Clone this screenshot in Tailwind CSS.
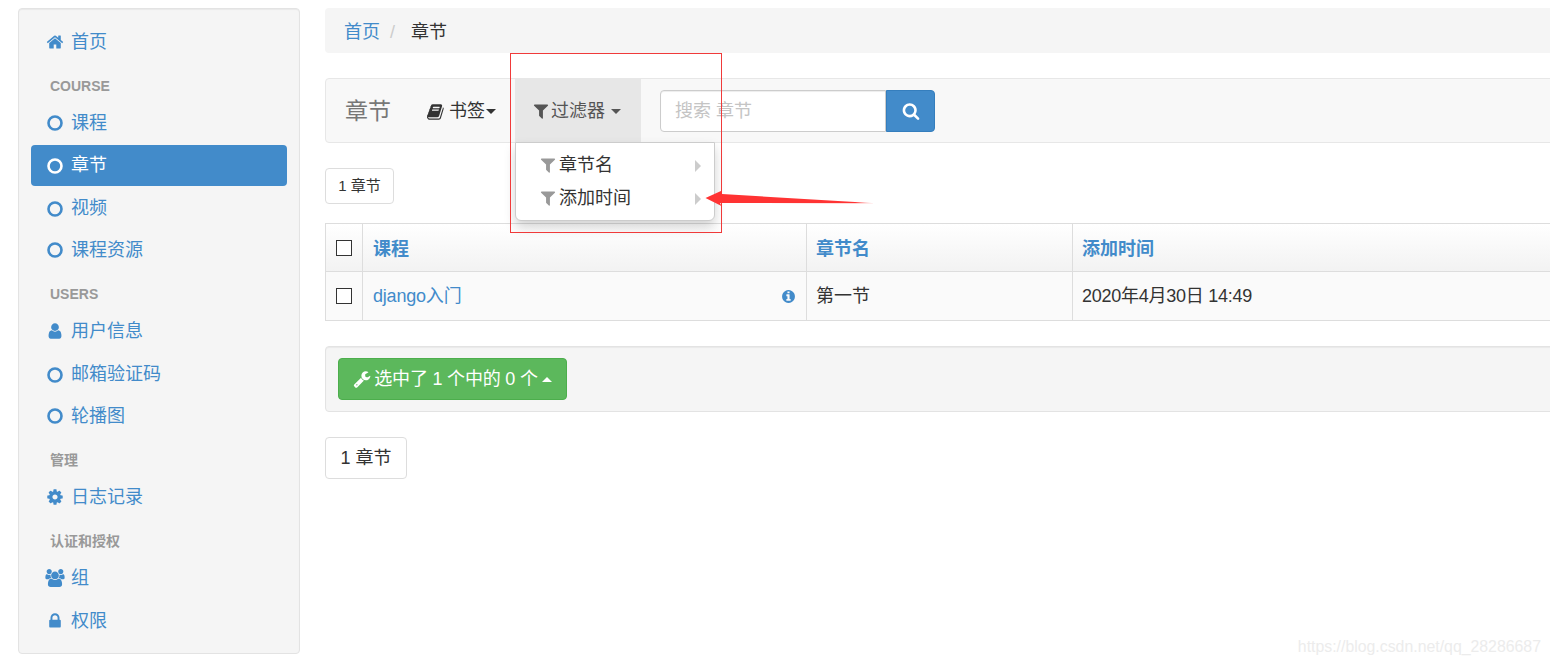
<!DOCTYPE html>
<html lang="zh-CN">
<head>
    <meta charset="UTF-8">
    <title>章节</title>
    <script src="https://cdn.jsdelivr.net/npm/@tailwindcss/browser@4"></script>
</head>
<body class="relative w-[1550px] h-[665px] overflow-hidden bg-white text-[#333] text-[18px] font-['Liberation_Sans','Noto_Sans_CJK_SC',sans-serif]">
    <!-- 共用圖示 -->
    <svg class="hidden">
        <symbol id="i-home" viewBox="0 0 1792 1792"><path d="M1472 992v480q0 26-19 45t-45 19h-384v-384h-256v384h-384q-26 0-45-19t-19-45v-480q0-1 .5-3t.5-3l575-474 575 474q1 2 1 6zm223-69l-62 74q-8 9-21 11h-3q-13 0-21-7l-692-577-692 577q-12 8-24 7-13-2-21-11l-62-74q-8-10-7-23.500t11-21.500l719-599q32-26 76-26t76 26l244 204v-195q0-14 9-23t23-9h192q14 0 23 9t9 23v408l219 182q10 8 11 21.500t-7 23.500z" fill="currentColor"/></symbol>
        <symbol id="i-circle" viewBox="0 0 16 16"><circle cx="8" cy="8" r="6.5" fill="none" stroke="currentColor" stroke-width="2.6"/></symbol>
        <symbol id="i-user" viewBox="0 0 1792 1792"><path d="M1536 1399q0 109-62.500 187t-150.500 78h-854q-88 0-150.500-78t-62.500-187q0-85 8.500-160.500t31.500-152 58.500-131 94-89 134.500-34.500q131 128 313 128t313-128q76 0 134.500 34.500t94 89 58.500 131 31.500 152 8.500 160.500zm-256-887q0 159-112.500 271.500t-271.500 112.500-271.500-112.500-112.500-271.500 112.500-271.500 271.500-112.500 271.500 112.500 112.500 271.500z" fill="currentColor"/></symbol>
        <symbol id="i-cog" viewBox="0 0 1792 1792"><path d="M1152 896q0-106-75-181t-181-75-181 75-75 181 75 181 181 75 181-75 75-181zm512-109v222q0 12-8 23t-20 13l-185 28q-19 54-39 91 35 50 107 138 10 12 10 25t-9 23q-27 37-99 108t-94 71q-12 0-26-9l-138-108q-44 23-91 38-16 136-29 186-7 28-36 28h-222q-14 0-24.500-8.500t-11.500-21.500l-28-184q-49-16-90-37l-141 107q-10 9-25 9-14 0-25-11-126-114-165-168-7-10-7-23 0-12 8-23 15-21 51-66.500t54-70.500q-27-50-41-99l-183-27q-13-2-21-12.500t-8-23.500v-222q0-12 8-23t19-13l186-28q14-46 39-92-40-57-107-138-10-12-10-24 0-10 9-23 26-36 98.500-107.500t94.500-71.500q13 0 26 10l138 107q44-23 91-38 16-136 29-186 7-28 36-28h222q14 0 24.500 8.500t11.500 21.500l28 184q49 16 90 37l142-107q9-9 24-9 13 0 25 10 129 119 165 170 7 8 7 22 0 12-8 23-15 21-51 66.500t-54 70.500q26 50 41 98l183 28q13 2 21 12.500t8 23.500z" fill="currentColor"/></symbol>
        <symbol id="i-group" viewBox="0 0 1920 1792"><path d="M593 896q-162 5-265 128h-134q-82 0-138-40.500t-56-118.500q0-353 124-353 6 0 43.500 21t97.500 42.500 119 21.500q67 0 133-23-5 37-5 66 0 139 81 256zm1071 637q0 120-73 189.500t-194 69.500h-874q-121 0-194-69.500t-73-189.500q0-53 3.500-103.500t14-109 26.500-108.500 43-97.500 62-81 85.500-53.500 111.500-20q10 0 43 21.500t73 48 107 48 135 21.500 135-21.500 107-48 73-48 43-21.500q61 0 111.500 20t85.500 53.500 62 81 43 97.500 26.500 108.500 14 109 3.500 103.500zm-1024-1277q0 106-75 181t-181 75-181-75-75-181 75-181 181-75 181 75 75 181zm704 384q0 159-112.500 271.500t-271.500 112.500-271.500-112.500-112.500-271.500 112.500-271.500 271.500-112.500 271.500 112.500 112.500 271.500zm576 225q0 78-56 118.500t-138 40.500h-134q-103-123-265-128 81-117 81-256 0-29-5-66 66 23 133 23 59 0 119-21.500t97.500-42.500 43.500-21q124 0 124 353zm-128-609q0 106-75 181t-181 75-181-75-75-181 75-181 181-75 181 75 75 181z" fill="currentColor"/></symbol>
        <symbol id="i-lock" viewBox="0 0 1792 1792"><path d="M640 768h512v-192q0-106-75-181t-181-75-181 75-75 181v192zm832 96v576q0 40-28 68t-68 28h-960q-40 0-68-28t-28-68v-576q0-40 28-68t68-28h32v-192q0-184 132-316t316-132 316 132 132 316v192h32q40 0 68 28t28 68z" fill="currentColor"/></symbol>
        <symbol id="i-filter" viewBox="0 0 1792 1792"><path d="M1595 295q17 41-14 70l-493 493v742q0 42-39 59-13 5-25 5-27 0-45-19l-256-256q-19-19-19-45v-486l-493-493q-31-29-14-70 17-39 59-39h1280q42 0 59 39z" fill="currentColor"/></symbol>
        <symbol id="i-book" viewBox="0 0 1792 1792"><path d="M1639 478q40 57 18 129l-275 906q-19 64-76.500 107.500t-122.500 43.500h-923q-77 0-148.500-53.500t-99.500-131.500q-24-67-2-127 0-4 3-27t4-37q1-8-3-21.500t-3-19.500q2-11 8-21t16.500-23.500 16.500-23.500q23-38 45-91.500t30-91.500q3-10 .5-30t-.5-28q3-11 17-28t17-23q21-36 42-92t25-90q1-9-2.500-32t.5-28q4-13 22-30.500t22-22.500q19-26 42.500-84.500t27.500-96.500q1-8-3-25.500t-2-26.500q2-8 9-18t18-23 17-21q8-12 16.500-30.500t15-35 16-36 19.500-32 26.500-23.500 36-11.500 47.500 5.500l-1 3q38-9 51-9h761q74 0 114 56t18 130l-274 906q-36 119-71.500 153.500t-128.500 34.500h-869q-27 0-38 15-11 16-1 43 24 70 144 70h923q29 0 56-15.500t35-41.500l300-987q7-22 5-57 38 15 59 43zm-1064 2q-4 13 2 22.500t20 9.500h608q13 0 25.500-9.500t16.500-22.500l21-64q4-13-2-22.500t-20-9.500h-608q-13 0-25.500 9.500t-16.500 22.500zm-83 256q-4 13 2 22.500t20 9.500h608q13 0 25.500-9.500t16.500-22.500l21-64q4-13-2-22.500t-20-9.500h-608q-13 0-25.500 9.500t-16.500 22.500z" fill="currentColor"/></symbol>
    </svg>

    <div class="flex items-start pl-[18px] pt-[8px] gap-[25px]">
        <!-- 側邊欄 -->
        <aside class="w-[282px] h-[646px] shrink-0 bg-[#f5f5f5] border border-[#e3e3e3] rounded-[4px] shadow-[inset_0_1px_1px_rgba(0,0,0,0.05)] pl-[12px] pr-[12px] pt-[13px] text-[#428bca]">
            <a class="flex items-center gap-[7px] h-[40.4px] pl-[15px] rounded-[4px]"><svg class="w-[18px] h-[18px] shrink-0"><use href="#i-home"/></svg>首页</a>
            <div class="h-[40.6px] pt-[14px] pl-[19px] text-[14px] leading-[20px] font-bold text-[#999]">COURSE</div>
            <a class="flex items-center gap-[8px] h-[40.4px] pl-[16px] rounded-[4px]"><svg class="w-[16px] h-[16px] shrink-0"><use href="#i-circle"/></svg>课程</a>
            <a class="flex items-center gap-[8px] h-[40.4px] mt-[2px] pl-[16px] rounded-[4px] bg-[#428bca] text-white"><svg class="w-[16px] h-[16px] shrink-0"><use href="#i-circle"/></svg>章节</a>
            <a class="flex items-center gap-[8px] h-[40.4px] mt-[2px] pl-[16px] pt-[2px] rounded-[4px]"><svg class="w-[16px] h-[16px] shrink-0"><use href="#i-circle"/></svg>视频</a>
            <a class="flex items-center gap-[8px] h-[40.4px] mt-[2px] pl-[16px] rounded-[4px]"><svg class="w-[16px] h-[16px] shrink-0"><use href="#i-circle"/></svg>课程资源</a>
            <div class="h-[40.6px] pt-[13px] pl-[19px] text-[14px] leading-[20px] font-bold text-[#999]">USERS</div>
            <a class="flex items-center gap-[7px] h-[40.4px] pl-[15px] rounded-[4px]"><svg class="w-[18px] h-[18px] shrink-0"><use href="#i-user"/></svg>用户信息</a>
            <a class="flex items-center gap-[8px] h-[40.4px] mt-[2px] pl-[16px] pt-[2px] rounded-[4px]"><svg class="w-[16px] h-[16px] shrink-0"><use href="#i-circle"/></svg>邮箱验证码</a>
            <a class="flex items-center gap-[8px] h-[40.4px] mt-[2px] pl-[16px] rounded-[4px]"><svg class="w-[16px] h-[16px] shrink-0"><use href="#i-circle"/></svg>轮播图</a>
            <div class="h-[40.6px] pt-[14px] pl-[19px] text-[14px] leading-[20px] font-bold text-[#999]">管理</div>
            <a class="flex items-center gap-[7px] h-[40.4px] pl-[15px] rounded-[4px]"><svg class="w-[18px] h-[18px] shrink-0"><use href="#i-cog"/></svg>日志记录</a>
            <div class="h-[40.6px] pt-[14px] pl-[19px] text-[14px] leading-[20px] font-bold text-[#999]">认证和授权</div>
            <a class="flex items-center gap-[6px] h-[40.4px] pl-[14px] rounded-[4px]"><svg class="w-[20px] h-[18px] shrink-0"><use href="#i-group"/></svg>组</a>
            <a class="flex items-center gap-[7px] h-[40.4px] mt-[2px] pl-[15px] pt-[2px] rounded-[4px]"><svg class="w-[18px] h-[18px] shrink-0"><use href="#i-lock"/></svg>权限</a>
        </aside>

        <!-- 主內容 -->
        <main class="w-[1260px] shrink-0">
            <div class="flex items-center h-[45px] pl-[19px] pt-[3px] bg-[#f5f5f5] rounded-[4px]">
                <a class="text-[#428bca]">首页</a>
                <span class="text-[#ccc] ml-[10px] mr-[16px]">/</span>
                <span>章节</span>
            </div>

            <!-- 工具列 -->
            <div class="relative flex items-center h-[65px] mt-[25px] bg-[#f8f8f8] border border-[#e7e7e7] rounded-[4px]">
                <span class="ml-[19px] w-[82px] pt-[1px] text-[23px] text-[#777]">章节</span>
                <span class="flex items-center pt-[2px] text-[#333]">
                    <svg class="w-[18px] h-[18px] mr-[4px]"><use href="#i-book"/></svg>书签<span class="ml-[1px] border-x-[5px] border-x-transparent border-t-[5px] border-t-[#333]"></span>
                </span>
                <span class="flex items-center self-stretch ml-[19px] w-[126px] pl-[17px] pt-[2px] bg-[#e7e7e7] text-[#555]">
                    <svg class="w-[18px] h-[18px] -mt-[2px] mr-[1px]"><use href="#i-filter"/></svg>过滤器<span class="ml-[6px] border-x-[5px] border-x-transparent border-t-[5px] border-t-[#555]"></span>
                </span>
                <div class="flex ml-[19px]">
                    <div class="flex items-center w-[226px] h-[42px] pl-[14px] pt-[2px] bg-white border border-[#ccc] rounded-l-[4px] shadow-[inset_0_1px_1px_rgba(0,0,0,0.075)] text-[#c4c4c4]">搜索 章节</div>
                    <button class="flex items-center justify-center w-[49px] h-[42px] bg-[#428bca] border border-[#357ebd] rounded-r-[4px] text-white">
                        <svg class="w-[18px] h-[18px]" viewBox="0 0 1792 1792"><path d="M1216 832q0-185-131.500-316.500t-316.500-131.500-316.500 131.500-131.500 316.500 131.500 316.500 316.500 131.500 316.500-131.500 131.500-316.500zm512 832q0 52-38 90t-90 38q-54 0-90-38l-343-342q-179 124-399 124-143 0-273.500-55.500t-225-150-150-225-55.500-273.500 55.500-273.500 150-225 225-150 273.500-55.500 273.500 55.500 225 150 150 225 55.500 273.500q0 220-124 399l343 343q37 37 37 90z" fill="currentColor"/></svg>
                    </button>
                </div>

                <!-- 過濾器選單 -->
                <div class="absolute z-10 left-[189px] top-[63px] w-[200px] h-[79px] pt-[6px] bg-white border border-[#ccc] rounded-b-[6px] shadow-[0_6px_12px_rgba(0,0,0,0.175)]">
                    <div class="flex items-center h-[33px] pl-[23px] pr-[13px]">
                        <svg class="w-[18px] h-[18px] -mt-[2px] mr-[2px] text-[#999]"><use href="#i-filter"/></svg>章节名
                        <span class="ml-auto border-y-[6px] border-y-transparent border-l-[6px] border-l-[#ccc]"></span>
                    </div>
                    <div class="flex items-center h-[33px] pl-[23px] pr-[13px]">
                        <svg class="w-[18px] h-[18px] -mt-[2px] mr-[2px] text-[#999]"><use href="#i-filter"/></svg>添加时间
                        <span class="ml-auto border-y-[6px] border-y-transparent border-l-[6px] border-l-[#ccc]"></span>
                    </div>
                </div>
            </div>

            <div class="flex items-center justify-center w-[69px] h-[36px] mt-[25px] border border-[#ddd] rounded-[4px] text-[15px]">1 章节</div>

            <!-- 資料表 -->
            <table class="w-full mt-[19px] table-fixed border-collapse">
                <colgroup>
                    <col class="w-[37px]"><col class="w-[444px]"><col class="w-[266px]"><col>
                </colgroup>
                <thead>
                    <tr class="h-[48px] bg-gradient-to-b from-white to-[#f2f2f2] text-[#428bca] font-bold text-left">
                        <th class="border border-[#ddd] pl-[10px]"><span class="block w-[16px] h-[16px] bg-white border border-[#333]"></span></th>
                        <th class="border border-[#ddd] pl-[10px] pt-[4px]">课程</th>
                        <th class="border border-[#ddd] pl-[9px] pt-[4px]">章节名</th>
                        <th class="border border-[#ddd] pl-[9px] pt-[4px]">添加时间</th>
                    </tr>
                </thead>
                <tbody>
                    <tr class="h-[49px] bg-[#fafafa]">
                        <td class="border border-[#ddd] pl-[10px]"><span class="block w-[16px] h-[16px] bg-white border border-[#333]"></span></td>
                        <td class="border border-[#ddd] pl-[10px] pr-[10px]">
                            <div class="flex items-center justify-between text-[#428bca]"><span class="tracking-[-0.2px]">django入门</span>
                                <svg class="w-[15px] h-[15px]" viewBox="0 0 1792 1792"><path d="M1152 1376v-160q0-14-9-23t-23-9h-96v-512q0-14-9-23t-23-9h-320q-14 0-23 9t-9 23v160q0 14 9 23t23 9h96v320h-96q-14 0-23 9t-9 23v160q0 14 9 23t23 9h448q14 0 23-9t9-23zm-128-896v-160q0-14-9-23t-23-9h-192q-14 0-23 9t-9 23v160q0 14 9 23t23 9h192q14 0 23-9t9-23zm640 416q0 209-103 385.500t-279.500 279.500-385.500 103-385.500-103-279.500-279.500-103-385.500 103-385.500 279.500-279.500 385.500-103 385.500 103 279.500 279.500 103 385.500z" fill="currentColor"/></svg>
                            </div>
                        </td>
                        <td class="border border-[#ddd] pl-[9px]">第一节</td>
                        <td class="border border-[#ddd] pl-[9px] tracking-[-0.25px]">2020年4月30日 14:49</td>
                    </tr>
                </tbody>
            </table>

            <!-- 批次操作 -->
            <div class="flex items-center h-[66px] mt-[25px] pl-[12px] bg-[#f5f5f5] border border-[#e3e3e3] rounded-[4px] shadow-[inset_0_1px_1px_rgba(0,0,0,0.05)]">
                <button class="flex items-center justify-center w-[229px] h-[42px] bg-[#5cb85c] border border-[#4cae4c] rounded-[4px] text-white">
                    <svg class="w-[18px] h-[18px] mr-[3px]" viewBox="0 0 1792 1792"><path d="M448 1472q0-26-19-45t-45-19-45 19-19 45 19 45 45 19 45-19 19-45zm644-420l-682 682q-37 37-90 37-52 0-91-37l-106-108q-38-36-38-90 0-53 38-91l681-681q39 98 114.500 173.500t173.500 114.500zm634-435q0 39-23 106-47 134-164.500 217.500t-258.500 83.500q-185 0-316.500-131.500t-131.500-316.500 131.500-316.500 316.500-131.500q58 0 121.500 16.500t107.500 46.500q16 11 16 28t-16 28l-293 169v224l193 107q5-3 79-48.500t135.500-81 70.500-35.500q15 0 23.500 10t8.500 25z" fill="currentColor"/></svg>
                    <span class="tracking-[-0.2px]">选中了 1 个中的 0 个</span><span class="ml-[4px] border-x-[5px] border-x-transparent border-b-[5px] border-b-white"></span>
                </button>
            </div>

            <div class="flex items-center justify-center w-[82px] h-[42px] mt-[25px] pt-[1px] border border-[#ddd] rounded-[4px]">1 章节</div>
        </main>
    </div>

    <!-- 紅框與箭頭標註 -->
    <div class="absolute z-20 left-[510px] top-[53px] w-[212px] h-[180px] border border-[#f03a3a]"></div>
    <svg class="absolute z-20 left-[700px] top-[185px]" width="180" height="25" viewBox="0 0 180 25">
        <defs>
            <linearGradient id="arrowFade" x1="0" x2="1" y1="0" y2="0">
                <stop offset="0" stop-color="#ff3333"/>
                <stop offset="0.88" stop-color="#ff3333"/>
                <stop offset="1" stop-color="#ff3333" stop-opacity="0.15"/>
            </linearGradient>
        </defs>
        <polygon points="5.500,13 21.500,5.700 22,9 176,18.300 20,18 21.500,21" fill="url(#arrowFade)"/>
    </svg>

    <!-- 浮水印 -->
    <div class="absolute right-[9px] top-[637px] text-[15.85px] leading-[20px] text-[#ececec]">https://blog.csdn.net/qq_28286687</div>
</body>
</html>
